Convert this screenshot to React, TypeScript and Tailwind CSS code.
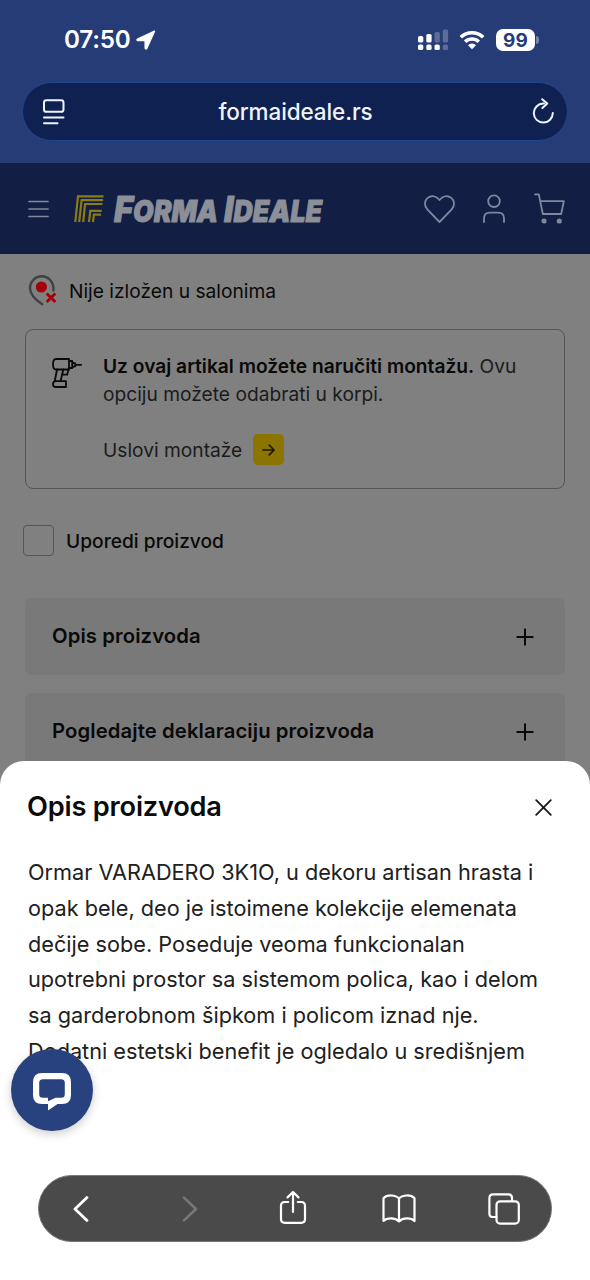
import type { ReactNode } from "react";

const DESCRIPTION = [
  "Ormar VARADERO 3K1O, u dekoru artisan hrasta i",
  "opak bele, deo je istoimene kolekcije elemenata",
  "dečije sobe. Poseduje veoma funkcionalan",
  "upotrebni prostor sa sistemom polica, kao i delom",
  "sa garderobnom šipkom i policom iznad nje.",
  "Dodatni estetski benefit je ogledalo u središnjem",
];

function Icon({ w, h, stroke = 2, className = "", children }: { w: number; h: number; stroke?: number; className?: string; children: ReactNode }) {
  return (
    <svg
      width={w}
      height={h}
      viewBox={`0 0 ${w} ${h}`}
      fill="none"
      stroke="currentColor"
      strokeWidth={stroke}
      strokeLinecap="round"
      strokeLinejoin="round"
      className={`shrink-0 ${className}`}
    >
      {children}
    </svg>
  );
}

function StatusBar() {
  return (
    <div className="flex h-20 items-center pl-16 pr-[51px] text-white">
      <span className="mt-px text-[24.2px] font-semibold tracking-[-0.2px]">07:50</span>
      <Icon w={20} h={20} stroke={1.5} className="ml-[6px]">
        <path d="M18.5 1.2 1.5 9.2c-.7.4-.5 1.4.3 1.4h7.4v7.5c0 .9 1.1 1.1 1.5.3l7.8-17.2Z" fill="currentColor" />
      </Icon>
      <Icon w={31} h={22} stroke={0} className="ml-auto">
        <g fill="currentColor">
          <rect x="0" y="7" width="5.3" height="6.5" rx="1.6" />
          <rect x="8.3" y="5" width="5.3" height="8.5" rx="1.6" />
          <rect x="16.5" y="3" width="5.3" height="10.5" rx="1.6" opacity=".25" />
          <rect x="24.8" y="0.5" width="5.3" height="13" rx="1.6" opacity=".25" />
          <rect x="0" y="15.5" width="5.3" height="5.5" rx="1.6" />
          <rect x="8.3" y="15.5" width="5.3" height="5.5" rx="1.6" />
          <rect x="16.5" y="15.5" width="5.3" height="5.5" rx="1.6" />
          <rect x="24.8" y="15.5" width="5.3" height="5.5" rx="1.6" opacity=".25" />
        </g>
      </Icon>
      <Icon w={28} h={20} stroke={3.6} className="ml-[9px]">
        <path d="M2.8 7.3a16 16 0 0 1 22.4 0M7.2 11.8a9.7 9.7 0 0 1 13.6 0" strokeLinecap="butt" />
        <path d="M14 19.2 10 15.2a5.7 5.7 0 0 1 8 0Z" fill="currentColor" stroke="none" />
      </Icon>
      <div className="ml-[10px] flex h-[22px] w-[39px] items-center justify-center rounded-[7px] bg-white">
        <span className="text-[19px] font-bold leading-none tracking-[0.2px] text-[#263c76]">99</span>
      </div>
      <div className="ml-px h-2 w-[3px] rounded-r-full bg-[#7283ad]" />
    </div>
  );
}

function AddressBar() {
  return (
    <div className="mx-[22px] mt-0.5 flex h-[59px] items-center justify-between rounded-full border border-[#214493] bg-[#0f2150] pl-5 pr-[13px] text-[#eef4ff]">
      <Icon w={22} h={26} stroke={2}>
        <rect x="1" y="1.3" width="19.5" height="11.5" rx="2.4" />
        <path d="M1 18.4h19.5M1 24.2h13.5" />
      </Icon>
      <span className="-ml-1.5 text-[22.5px] font-medium tracking-[-0.1px]">formaideale.rs</span>
      <Icon w={22} h={26} stroke={2} className="-mt-0.5">
        <path d="M12 5.6h-.8A9.5 9.5 0 1 0 20.8 15" />
        <path d="m10.2 1.2 5 4.4-4.8 4.5" />
      </Icon>
    </div>
  );
}

function Logo() {
  return (
    <Icon w={260} h={60} stroke={0} className="ml-6">
      <g stroke="#8b7c13" strokeWidth="2.2" strokeLinecap="butt" strokeLinejoin="miter">
        <path d="M2.3 43 5 17.3h25.5" />
        <path d="M6.2 43 8.6 21.1h21.5" />
        <path d="M10.2 43 12.1 25h17.3" />
        <path d="m16 43 1.3-11.2h11.4" />
        <path d="m20 43 .9-7.4h7.2" />
      </g>
      <g fill="#8b8f98" stroke="#8b8f98" strokeWidth="0.9" className="font-[Inter] font-black italic">
        <text x="41" y="42.5" fontSize="36" textLength="104" lengthAdjust="spacingAndGlyphs">
          F<tspan fontSize="29.5">ORMA</tspan>
        </text>
        <text x="151" y="42.5" fontSize="36" textLength="98" lengthAdjust="spacingAndGlyphs">
          I<tspan fontSize="29.5">DEALE</tspan>
        </text>
      </g>
    </Icon>
  );
}

function SiteHeader() {
  return (
    <header className="mt-[22px] flex h-[91px] items-center bg-[#121e43] pl-7 pr-[25px] text-[#8087a0]">
      <Icon w={21} h={18} stroke={1.7}>
        <path d="M1 1.5h19M1 9h19M1 16.5h19" />
      </Icon>
      <Logo />
      <Icon w={31} h={28} stroke={1.8} className="ml-auto">
        <path d="M15.5 27 3.3 14.4C-.1 10.8.5 5.3 3.7 2.9c3.7-2.8 8.3-2.2 11.8 2.1 3.5-4.3 8.1-4.9 11.8-2.1 3.2 2.4 3.8 7.9.4 11.5Z" />
      </Icon>
      <Icon w={22} h={29} stroke={1.8} className="ml-7">
        <circle cx="11" cy="7.2" r="5.8" />
        <path d="M1 28v-3.7c0-3.6 2.2-5.7 5.6-5.7h8.8c3.4 0 5.6 2.1 5.6 5.7V28" />
      </Icon>
      <Icon w={31} h={31} stroke={1.8} className="ml-[29px]">
        <path d="M1 1.4h3.8L8.8 21h18.4l2.6-12.8H6.2" />
        <circle cx="10" cy="28" r="1.7" fill="currentColor" />
        <circle cx="25.3" cy="28" r="1.7" fill="currentColor" />
      </Icon>
    </header>
  );
}

function AccordionRow({ title }: { title: string }) {
  return (
    <div className="flex h-[77px] items-center justify-between rounded-md bg-[#797979] pl-[27px] pr-[31px]">
      <span className="text-[20.3px] font-semibold tracking-[0.1px]">{title}</span>
      <Icon w={18} h={18} stroke={2}>
        <path d="M9 1.3v15.4M1.3 9h15.4" />
      </Icon>
    </div>
  );
}

function ProductPage() {
  return (
    <main className="px-[25px] text-[#090909]">
      <div className="flex h-[75px] items-center">
        <Icon w={30} h={32} stroke={2.4} className="-mt-px ml-[3px]">
          <path d="M14.2 29.3C8.6 25.6 2 19.6 2 13a11.7 11.7 0 0 1 23.4 0v2.5" stroke="#3e4246" />
          <circle cx="13.4" cy="12" r="5.6" fill="#a30009" stroke="none" />
          <path d="m18.7 18.6 8.6 8.4m0-8.4L18.7 27" stroke="#a30009" strokeWidth="2.8" strokeLinecap="butt" />
        </Icon>
        <span className="ml-[11px] text-[19.2px]">Nije izložen u salonima</span>
      </div>

      <div className="flex h-[160px] rounded-lg border border-[#555] px-[26px] pt-[22px]">
        <Icon w={30} h={31} stroke={1.8} className="mt-[6px]">
          <path d="M4 1h13v10.5H4C1.8 11.5 1 9.6 1 6.2S1.8 1 4 1Z" />
          <path d="M17 3h3.2v7H17M20.2 4.5l3 .8v3l-3 .7M23.2 6.8h6" />
          <path d="M5 11.5 2.8 23M11.3 11.5 8.6 23M16.5 11.5l-1.3 5.2h-4.9" />
          <path d="M3.8 23.2H14V29H3.8C1.8 29 1 28.1 1 26.4c0-2 .9-3.200 2.800-3.200Z" />
        </Icon>
        <div className="ml-[21px] whitespace-nowrap text-[19.2px] leading-7 text-[#1b1b1b]">
          <p>
            <span className="font-semibold text-[#090909]">Uz ovaj artikal možete naručiti montažu.</span> Ovu
          </p>
          <p>opciju možete odabrati u korpi.</p>
          <div className="mt-[26px] flex items-center">
            <span>Uslovi montaže</span>
            <div className="ml-[11px] flex size-[31px] items-center justify-center rounded-[5px] bg-[#8c7400]">
              <Icon w={13} h={12} stroke={1.7} className="text-[#1c1700]">
                <path d="M1 6h11M7.3 1.2 12 6l-4.7 4.8" />
              </Icon>
            </div>
          </div>
        </div>
      </div>

      <div className="-ml-0.5 mt-9 flex items-center">
        <div className="size-[31px] rounded-[4px] border border-[#555]" />
        <span className="ml-3 mt-0.5 text-[19.2px] font-medium">Uporedi proizvod</span>
      </div>

      <div className="mt-[42px] flex flex-col gap-[18px]">
        <AccordionRow title="Opis proizvoda" />
        <AccordionRow title="Pogledajte deklaraciju proizvoda" />
      </div>
    </main>
  );
}

function DescriptionSheet() {
  return (
    <section className="absolute inset-x-0 bottom-0 h-[519px] rounded-t-[24px] bg-white px-7 pt-[26px]">
      <div className="-ml-px flex h-[41px] items-center justify-between">
        <h2 className="text-[27.2px] font-semibold tracking-[-0.2px] text-[#0b0b0b]">Opis proizvoda</h2>
        <Icon w={17} h={17} stroke={1.8} className="mr-2.5 text-[#181818]">
          <path d="m1.2 1.2 14.6 14.6m0-14.6L1.2 15.8" />
        </Icon>
      </div>
      <div className="mt-[27px] whitespace-nowrap text-[21.7px] leading-[35.8px] text-[#202020]">
        {DESCRIPTION.map((line) => (
          <p key={line}>{line}</p>
        ))}
      </div>
    </section>
  );
}

function ChatButton() {
  return (
    <button className="absolute left-[11px] top-[1049px] flex size-[82px] items-center justify-center rounded-full bg-[#28427f] shadow-[0_3px_10px_rgba(0,0,0,0.2)]">
      <Icon w={40} h={40} stroke={0} className="mt-1 text-white">
        <path
          d="M10 1h20q9 0 9 9v13q0 9-9 9h-4.5L16 38.500V32h-6q-9 0-9-9V10q0-9 9-9Zm.8 6.200Q7.200 7.200 7.200 10.800v11.400q0 3.600 3.600 3.600H16v3.400l7.500-3.400h5.700q3.600 0 3.600-3.600V10.800q0-3.600-3.600-3.600Z"
          fill="currentColor"
          fillRule="evenodd"
        />
      </Icon>
    </button>
  );
}

function BrowserToolbar() {
  return (
    <nav className="absolute bottom-[38px] left-[38px] flex h-[67px] w-[514px] items-center rounded-full border border-[#777] bg-[#4a4a4a] text-white">
      <Icon w={16} h={26} stroke={2.8} className="ml-[34px]">
        <path d="M14 1.6 2 13l12 11.4" />
      </Icon>
      <Icon w={16} h={26} stroke={2.6} className="ml-[93px] text-[#777]">
        <path d="m2 1.6 12 11.4L2 24.4" />
      </Icon>
      <Icon w={28} h={36} stroke={2.2} className="-mt-0.5 ml-[81px]">
        <path d="M9.2 12H5.8Q2 12 2 15.8V29q0 3.8 3.8 3.8h16.4Q26 32.8 26 29V15.8Q26 12 22.2 12h-3.4M14 22V2.200M8.500 7.400 14 2l5.500 5.400" />
      </Icon>
      <Icon w={34} h={29} stroke={2.2} className="ml-[75px]">
        <path d="M17 4.600C13.500.5 5 .5 1.500 4.200V27c3.500-3.500 12-3.500 15.500.5 3.500-4 12-4 15.500-.5V4.200C29 .5 20.500.5 17 4.600Zm0 0v22.900" />
      </Icon>
      <Icon w={32} h={32} stroke={2.2} className="ml-[72px]">
        <path d="M8.500 24H5q-3.600 0-3.600-3.600V5Q1.400 1.400 5 1.400h15.500Q24 1.400 24 5v3" />
        <rect x="8.5" y="8.3" width="22.3" height="22.3" rx="3.6" />
      </Icon>
    </nav>
  );
}

export default function App() {
  return (
    <div className="relative h-[1280px] w-[590px] overflow-hidden bg-[#808080] font-[Inter,sans-serif]">
      <div className="h-[163px] bg-[#263c76]">
        <StatusBar />
        <AddressBar />
        <SiteHeader />
        <ProductPage />
      </div>
      <DescriptionSheet />
      <ChatButton />
      <BrowserToolbar />
    </div>
  );
}
